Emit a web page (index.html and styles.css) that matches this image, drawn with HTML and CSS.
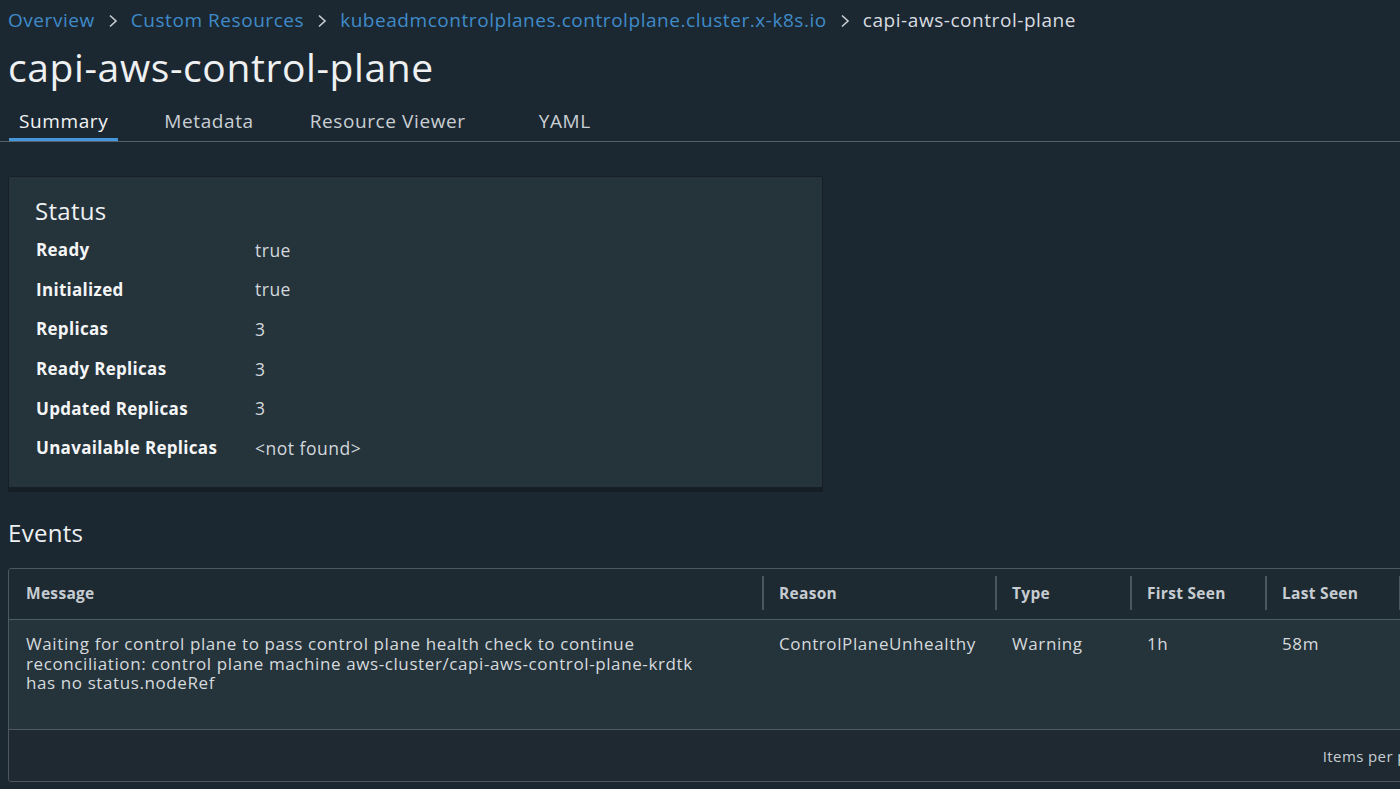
FILE: index.html
```html
<!DOCTYPE html>
<html lang="en">
<head>
<meta charset="utf-8">
<title>capi-aws-control-plane</title>
<link rel="stylesheet" href="styles.css">
</head>
<body>
<div class="page">
  <nav class="breadcrumb">
    <a class="crumb" href="#">Overview</a>
    <svg class="sep" width="10" height="14" viewBox="0 0 10 14"><polyline points="2,1.5 8,7 2,12.5" fill="none" stroke="#c9ced3" stroke-width="1.6"/></svg>
    <a class="crumb" href="#">Custom Resources</a>
    <svg class="sep" width="10" height="14" viewBox="0 0 10 14"><polyline points="2,1.5 8,7 2,12.5" fill="none" stroke="#c9ced3" stroke-width="1.6"/></svg>
    <a class="crumb" href="#">kubeadmcontrolplanes.controlplane.cluster.x-k8s.io</a>
    <svg class="sep" width="10" height="14" viewBox="0 0 10 14"><polyline points="2,1.5 8,7 2,12.5" fill="none" stroke="#c9ced3" stroke-width="1.6"/></svg>
    <span class="current">capi-aws-control-plane</span>
  </nav>
  <h1 class="title">capi-aws-control-plane</h1>
  <div class="tabs">
    <div class="tab active">Summary</div>
    <div class="tab tab-meta">Metadata</div>
    <div class="tab tab-rv">Resource Viewer</div>
    <div class="tab tab-yaml">YAML</div>
  </div>

  <section class="card">
    <h2 class="card-title">Status</h2>
    <div class="kv">
      <div class="k">Ready</div><div class="v">true</div>
      <div class="k">Initialized</div><div class="v">true</div>
      <div class="k">Replicas</div><div class="v">3</div>
      <div class="k">Ready Replicas</div><div class="v">3</div>
      <div class="k">Updated Replicas</div><div class="v">3</div>
      <div class="k">Unavailable Replicas</div><div class="v">&lt;not found&gt;</div>
    </div>
  </section>

  <h2 class="section-title">Events</h2>
  <div class="table-wrap">
    <table class="events">
      <colgroup>
        <col class="c-msg"><col class="c-reason"><col class="c-type"><col class="c-first"><col class="c-last"><col class="c-rest">
      </colgroup>
      <thead>
        <tr>
          <th><div class="th-in first">Message</div></th>
          <th><div class="th-in">Reason</div></th>
          <th><div class="th-in">Type</div></th>
          <th><div class="th-in">First Seen</div></th>
          <th><div class="th-in">Last Seen</div></th>
          <th><div class="th-in">Source</div></th>
        </tr>
      </thead>
      <tbody>
        <tr>
          <td>Waiting for control plane to pass control plane health check to continue reconciliation: control plane machine aws-cluster/capi-aws-control-plane-krdtk has no status.nodeRef</td>
          <td>ControlPlaneUnhealthy</td>
          <td>Warning</td>
          <td>1h</td>
          <td>58m</td>
          <td>kubeadm-control-plane-controller</td>
        </tr>
      </tbody>
      <tfoot>
        <tr>
          <td colspan="6">
            <div class="footer">
              <span>Items per page</span>
              <span class="select">10</span>
              <span>1 - 1 of 1 items</span>
            </div>
          </td>
        </tr>
      </tfoot>
    </table>
  </div>
</div>
</body>
</html>
```
FILE: styles.css
```css
html, body {
  margin: 0;
  padding: 0;
  background: #1c2831;
  overflow: hidden;
}
body {
  font-family: "Open Sans", "Liberation Sans", sans-serif;
  color: #e6e9ec;
  width: 1400px;
  height: 789px;
}
.page {
  padding: 8px 0 0 8px;
}
.breadcrumb {
  display: flex;
  align-items: center;
  gap: 13px;
  font-size: 19px;
  line-height: 24px;
  letter-spacing: 0.55px;
  white-space: nowrap;
}
.crumb {
  color: #3f8bc9;
  text-decoration: none;
}
.sep {
  flex: none;
  margin-top: 1px;
}
.current {
  color: #d8dce0;
}
.title {
  margin: 13px 0 0 0;
  font-size: 39px;
  line-height: 44px;
  font-weight: 400;
  letter-spacing: 0.6px;
  color: #eef0f2;
}
.tabs {
  display: flex;
  margin: 11px 0 0 -8px;
  padding-left: 9px;
  border-bottom: 1px solid #56626b;
}
.tab {
  font-size: 19px;
  line-height: 24px;
  letter-spacing: 0.6px;
  padding: 9px 10px 5px 10px;
  border-bottom: 3px solid transparent;
  color: #c9cfd4;
}
.tab.active {
  color: #f2f4f5;
  border-bottom-color: #4596da;
}
.tab-meta { margin-left: 36px; }
.tab-rv { margin-left: 36px; }
.tab-yaml { margin-left: 53px; }

.card {
  margin-top: 34px;
  width: 815px;
  background: #25333b;
  border: 1px solid #172027;
  box-shadow: 0 4px 0 #151e24;
  border-radius: 2px;
  padding: 19px 25px 19px 26px;
  box-sizing: border-box;
}
.card-title {
  margin: 0;
  font-size: 24px;
  line-height: 30px;
  font-weight: 400;
  letter-spacing: 0.3px;
  color: #eef0f2;
}
.kv {
  display: grid;
  grid-template-columns: 219px 1fr;
  grid-auto-rows: 39.6px;
  align-items: center;
  margin-top: 4px;
  padding-left: 1px;
}
.k {
  font-weight: 700;
  font-size: 17px;
  letter-spacing: 0.3px;
  color: #f4f5f6;
}
.v {
  font-size: 17.5px;
  letter-spacing: 0.5px;
  color: #d3d8dc;
}
.section-title {
  margin: 30px 0 0 0;
  font-size: 24px;
  line-height: 30px;
  font-weight: 400;
  letter-spacing: 0.3px;
  color: #eef0f2;
}
.table-wrap {
  margin-top: 20px;
  width: 1629px;
  border: 1px solid #4b5860;
  border-radius: 3px;
  overflow: hidden;
}
.events {
  width: 100%;
  border-collapse: collapse;
  table-layout: fixed;
}
.c-msg { width: 753px; }
.c-reason { width: 233px; }
.c-type { width: 135px; }
.c-first { width: 135px; }
.c-last { width: 134px; }
.events th {
  background: #1e2a32;
  height: 51px;
  box-sizing: border-box;
  padding: 0 0 2px 0;
  text-align: left;
  font-size: 15.5px;
  font-weight: 700;
  letter-spacing: 0.3px;
  color: #c6ccd1;
  border-bottom: 1px solid #4f5c64;
}
.th-in {
  border-left: 2px solid #4a5760;
  height: 34px;
  line-height: 34px;
  padding-left: 15px;
}
.th-in.first {
  border-left: none;
  padding-left: 17px;
}
.events tbody td {
  background: #25333b;
  height: 110px;
  vertical-align: top;
  padding: 14px 17px 0 17px;
  box-sizing: border-box;
  font-size: 17px;
  line-height: 19.5px;
  letter-spacing: 0.6px;
  color: #d5dadd;
  border-bottom: 1px solid #4f5c64;
}
.events tbody td:first-child {
  padding-left: 17px;
  padding-right: 40px;
}
.events tfoot td {
  background: #1e2931;
  height: 51px;
  padding: 0;
}
.footer {
  display: flex;
  align-items: center;
  justify-content: flex-end;
  gap: 14px;
  padding-right: 24px;
  font-size: 15px;
  letter-spacing: 0.4px;
  color: #c9ced3;
}
.select {
  border-bottom: 1px solid #8a949b;
  padding: 0 22px 0 4px;
}
```
